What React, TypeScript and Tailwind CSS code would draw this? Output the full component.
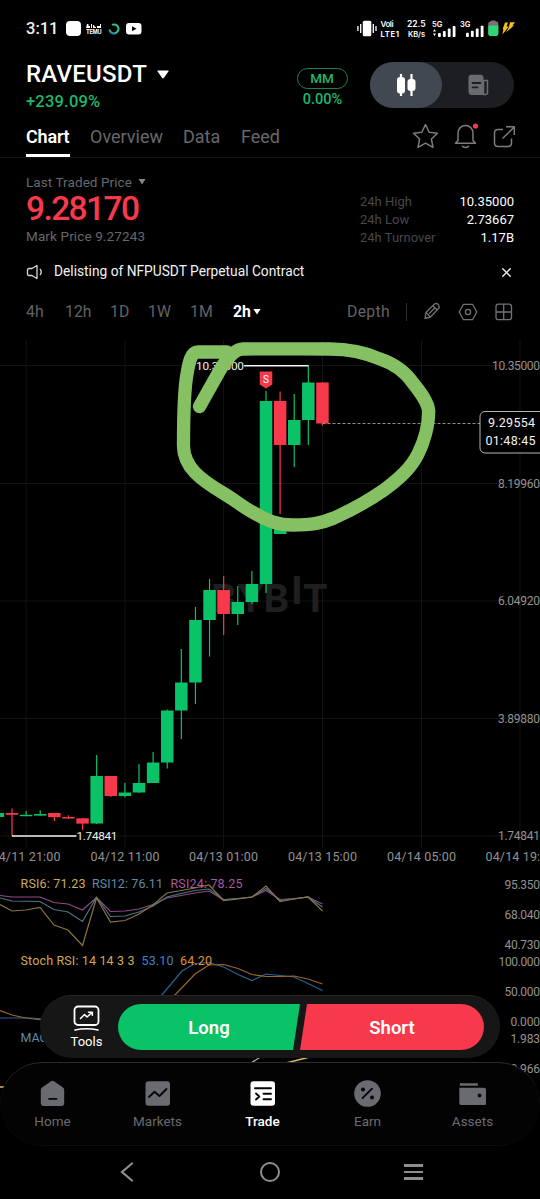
import { X } from "lucide-react";
import type { ReactNode } from "react";
import clsx from "clsx";

const UP = "#0ac268";
const DOWN = "#f8384b";

type Candle = {
  up: boolean;
  top: number;
  bottom: number;
  high: number;
  low: number;
};

const c = (
  up: boolean,
  top: number,
  bottom: number,
  high = top,
  low = bottom
): Candle => ({ up, top, bottom, high, low });

const candles: Candle[] = [
  c(true, 813, 817),
  c(false, 813, 814.8, 808.5, 836),
  c(true, 814.8, 816.2, 811),
  c(true, 814, 815.6, 810.3),
  c(false, 813, 817.2, 813, 821),
  c(false, 817, 818.5, 815.3, 819),
  c(false, 818.3, 823.6, 818, 830),
  c(true, 776, 823.5, 755, 824),
  c(false, 776, 796, 776, 797),
  c(true, 792.5, 796, 783, 797.5),
  c(true, 783, 792.5, 764, 793),
  c(true, 762.5, 783, 752),
  c(true, 710.5, 762.5, 709.5, 768.5),
  c(true, 682.5, 710.5, 649, 739),
  c(true, 620, 682.5, 607, 704),
  c(true, 590, 620, 579, 656.5),
  c(false, 590, 614, 576, 635),
  c(true, 602, 614, 586, 625),
  c(true, 584, 602, 571, 604),
  c(true, 401, 584, 391, 593),
  c(false, 401, 445, 391.5, 514),
  c(true, 420, 445, 394, 467),
  c(true, 382.5, 420, 365, 445),
  c(false, 382.5, 423.5, 382.5, 425.5),
];

const priceAxis: [string, number][] = [
  ["10.35000", 365.5],
  ["8.19960", 483.5],
  ["6.04920", 601],
  ["3.89880", 718.5],
  ["1.74841", 836],
];

const subAxis: [string, number][] = [
  ["95.350", 884.5],
  ["68.040", 914.5],
  ["40.730", 945],
  ["100.000", 962],
  ["50.000", 992],
  ["0.000", 1022],
  ["1.983", 1039],
  ["0.966", 1069],
];

const timeAxis: [string, number][] = [
  ["04/11 21:00", 26],
  ["04/12 11:00", 125],
  ["04/13 01:00", 223.5],
  ["04/13 15:00", 322.5],
  ["04/14 05:00", 421.5],
  ["04/14 19:00", 520],
];

const indicatorLines: { color: string; points: string }[] = [
  {
    color: "#8f4b8a",
    points:
      "0,895.5 12,897 40,897 54,902.5 68,904 82.5,910 96.5,897.5 110.5,911.5 125,911 139,909 153,904.5 167,898 181,895.5 195,893 209,891 223.5,900 238,898.5 252,897 266,890.5 280,899.5 294,898.5 308,897 322.5,904",
  },
  {
    color: "#4b7688",
    points:
      "0,898 12,901 40,901.5 54,909.5 68,912 82.5,921.5 96.5,897 110.5,916.5 125,916 139,912 153,906 167,897 181,893.5 195,890.5 209,889 223.5,899.5 238,898.5 252,897 266,888.5 280,900.5 294,899 308,897 322.5,907",
  },
  {
    color: "#8a7440",
    points:
      "0,904.5 12,911 26,910 40,907.5 54,925 68,930 82.5,945.5 96.5,898 110.5,922 125,920.5 139,914 153,905 167,893 181,890.5 195,888 209,885 223.5,900.5 238,899 252,897 266,886 280,901.5 294,899 308,897 322.5,911",
  },
  {
    color: "#276394",
    points:
      "0,1018 30,1018 60,1020 110,1020 140,1016 161,996 182,971 195,963.5 209,962.5 223.5,967 238,974.5 252,980.5 266,974 280,975.5 294,977 308,983.5 322.5,990.5",
  },
  {
    color: "#9a682a",
    points:
      "0,1010.5 12,1015 26,1018 42,1020 110,1022 150,1016 174,996 195,974 209,965 223.5,964.5 238,968.5 252,974.5 266,976.5 280,976.5 294,976 308,979 322.5,984",
  },
];

function PriceChart() {
  return (
    <svg
      className="block shrink-0"
      fontFamily="Roboto, sans-serif"
      height={764}
      viewBox="0 335 540 764"
      width={540}
    >
      <g stroke="#121212" strokeWidth={1}>
        {priceAxis.map(([label, y]) => (
          <path d={`M0 ${y}H540`} key={label} />
        ))}
        {timeAxis.map(([label, x]) => (
          <path d={`M${x} 340V848`} key={label} />
        ))}
      </g>

      {/* Watermark */}
      <g
        fill="#1f1f1f"
        fontFamily="Inter, sans-serif"
        fontSize={38.5}
        fontWeight={700}
      >
        <text x={211} y={612}>
          B
        </text>
        <text x={236.5} y={612}>
          Y
        </text>
        <text x={263.5} y={612}>
          B
        </text>
        <text x={291.5} y={604}>
          I
        </text>
        <text x={302.5} y={612}>
          T
        </text>
      </g>

      {candles.map((candle, i) => {
        const x = -2.1 + i * 14.11;
        const color = candle.up ? UP : DOWN;
        return (
          <g fill={color} key={x}>
            <rect
              height={candle.low - candle.high}
              width={1.2}
              x={x - 0.6}
              y={candle.high}
            />
            <rect
              height={candle.bottom - candle.top}
              width={12.5}
              x={x - 6.25}
              y={candle.top}
            />
          </g>
        );
      })}

      {/* Trade markers */}
      <path d="M274 534V521l6-4 6.500 4v13z" fill={UP} />
      <path d="M259.700 371.500h12.600v13l-6.300 4-6.300-4z" fill={DOWN} />
      <text fill="#fff" fontSize={10} textAnchor="middle" x={266} y={382.500}>
        S
      </text>

      {/* High / low callouts */}
      <path d="M244 365.800H308.500M12 836H76.500" stroke="#f2f2f2" strokeWidth={1.4} />
      <g fill="#eee" fontSize={11.8}>
        <text textLength={48} x={196} y={369.500}>
          10.35000
        </text>
        <text textLength={41} x={76.500} y={840}>
          1.74841
        </text>
      </g>

      <path
        d="M322.500 423.500H480"
        stroke="#8c8c8c"
        strokeDasharray="3 2"
        strokeWidth={1}
      />

      {indicatorLines.map((line) => (
        <polyline
          fill="none"
          key={line.color}
          points={line.points}
          stroke={line.color}
          strokeWidth={1.2}
        />
      ))}
      <path d="M251 1063L262 1056" stroke="#aebccb" strokeWidth={1.2} />
      <path d="M286 1063L308 1057.500M0 1087h6" stroke="#d9bb62" strokeWidth={1.4} />

      {/* Axis labels */}
      <g fill="#929292" fontSize={12}>
        {priceAxis.map(([label, y]) => (
          <text
            key={label}
            textLength={label.length === 8 ? 48 : 42}
            x={label.length === 8 ? 492 : 498}
            y={y + 4}
          >
            {label}
          </text>
        ))}
        {subAxis.map(([label, y]) => (
          <text
            key={label}
            textLength={label.length * 6 - 0.5}
            x={540.5 - label.length * 6}
            y={y + 4}
          >
            {label}
          </text>
        ))}
        {timeAxis.map(([label, x]) => (
          <text
            fontSize={12.500}
            key={label}
            textLength={69}
            x={x - 34.500}
            y={861}
          >
            {label}
          </text>
        ))}
      </g>

      {/* Indicator legends */}
      <g fontSize={12.500}>
        <text fill="#d0a955" textLength={65} x={20.500} y={888}>
          RSI6: 71.23
        </text>
        <text fill="#5d8ba6" textLength={71} x={92} y={888}>
          RSI12: 76.11
        </text>
        <text fill="#a8579f" textLength={72} x={170.500} y={888}>
          RSI24: 78.25
        </text>
        <text fill="#d0a955" textLength={114} x={20.500} y={965}>
          Stoch RSI: 14 14 3 3
        </text>
        <text fill="#3f82cf" textLength={32} x={141.500} y={965}>
          53.10
        </text>
        <text fill="#e0912f" textLength={32} x={180} y={965}>
          64.20
        </text>
        <text fill="#5d8ba6" x={20.500} y={1042}>
          MACD
        </text>
      </g>

      {/* Last price tag */}
      <rect
        fill="#000"
        height={41.500}
        rx={5}
        stroke="#b5b5b5"
        width={68}
        x={480}
        y={411.500}
      />
      <g fill="#f2f2f2" fontSize={12.500}>
        <text textLength={47} x={488} y={427.300}>
          9.29554
        </text>
        <text textLength={50} x={485.500} y={445.300}>
          01:48:45
        </text>
      </g>

      {/* Hand-drawn highlight */}
      <path
        d="M227 352L198 352C191 352 189 362 187 374C184 390 183.500 420 183.500 446C183.500 467 201 480 223 493C235 500 244 508 256 514C268 521 278 525 293 525C312 525 322 523 334 518C352 510 368 501 384 490C400 478 411 468 418 454C424 442 428.700 425 428.700 411C428 402 421 393 413 383C404 370 392 363 380 359C364 352 347 349 330 349C300 348.500 270 349 243 349C234 349 226 360 220 370L199.500 406.500"
        fill="none"
        stroke="#85c162"
        strokeLinecap="round"
        strokeLinejoin="round"
        strokeWidth={13.3}
      />
    </svg>
  );
}

function Signal({ label, bars }: { label: string; bars: number[] }) {
  return (
    <svg fill="#fff" height={18} viewBox="0 0 24 18" width={24}>
      <text fontFamily="Inter, sans-serif" fontSize={7.5} fontWeight={600} x={0} y={6.5}>
        {label}
      </text>
      {label === "5G" && <path d="M1 11.500l1.500-2.500 1.500 2.500zM1 13.500h3L2.500 16z" />}
      {bars.map((h, i) => (
        <rect
          height={h}
          key={h}
          rx={0.800}
          width={2.800}
          x={6 + i * 4.900}
          y={17 - h}
        />
      ))}
    </svg>
  );
}

function StatusBar() {
  return (
    <div className="flex h-[57px] shrink-0 items-center pr-[25px] pl-[26px]">
      <span className="w-[33px] pt-[1px] font-medium text-[#f0f0f0] text-[16.5px] leading-none">
        3:11
      </span>
      <span className="ml-[7px] size-[15px] rounded-[4px] bg-white" />
      <svg className="ml-[5px]" fill="#fff" height={12} viewBox="0 0 16 12" width={16}>
        <path d="M0 5h4V3H2.500V1H1zM5 1h1v4H5zM7 2h1l1 2h1V5H7zM11 3h3V1h1v4h-4z" />
        <text
          fontFamily="Inter, sans-serif"
          fontSize={5.600}
          fontWeight={700}
          textLength={15.500}
          x={0}
          y={11}
        >
          TEMU
        </text>
      </svg>
      <svg className="ml-[6px]" fill="none" height={12} viewBox="0 0 12 12" width={12}>
        <path d="M4 1.900A4.500 4.500 0 1 1 1.500 6.500" stroke="#2fbf8d" strokeWidth={2} />
        <path d="M2.500 9A4.500 4.500 0 0 0 7 10.500" stroke="#2b7fb8" strokeWidth={1.200} />
      </svg>
      <svg className="ml-[6px]" height={12} viewBox="0 0 16 12" width={16}>
        <rect fill="#fff" height={11.500} rx={3} width={15.500} />
        <path d="M6 3.300v5l4.500-2.500z" fill="#000" />
      </svg>

      <div className="ml-auto flex items-center">
        <svg fill="#fff" height={17} viewBox="0 0 20 17" width={20}>
          <rect height={15.500} rx={1.500} width={8.500} x={5.800} y={0.700} />
          <path
            d="M3.700 4v9M.9 6v5M16.300 4v9M19 6v5"
            stroke="#fff"
            strokeWidth={1.300}
          />
        </svg>
        <svg
          className="ml-[3px]"
          fill="#fff"
          fontFamily="Inter, sans-serif"
          height={18}
          viewBox="0 0 20 18"
          width={20}
        >
          <text fontSize={8} fontWeight={600} textLength={13} x={0.500} y={7}>
            Voli
          </text>
          <text fontSize={7.500} fontWeight={700} textLength={18.500} x={0.500} y={16.500}>
            LTE1
          </text>
        </svg>
        <svg
          className="ml-[7px]"
          fill="#fff"
          fontFamily="Inter, sans-serif"
          height={18}
          viewBox="0 0 20 18"
          width={20}
        >
          <text fontSize={8.500} fontWeight={600} textLength={18.500} x={0} y={7}>
            22.5
          </text>
          <text fontSize={7.500} fontWeight={600} textLength={17} x={1} y={16.500}>
            KB/s
          </text>
        </svg>
        <div className="ml-[5px] flex gap-1">
          <Signal bars={[4, 6, 8.500, 11]} label="5G" />
          <Signal bars={[4.200, 6.200, 8.400, 11.200]} label="3G" />
        </div>
        <svg className="ml-[4px]" height={17} viewBox="0 0 11 17" width={11}>
          <rect fill="#7d7075" height={6} rx={1} width={5} x={2.700} y={0.500} />
          <rect fill="#7d7075" height={14} rx={2} width={10} x={0.300} y={1.500} />
          <path d="M.3 5.500h10v8.500a2 2 0 0 1-2 2h-6a2 2 0 0 1-2-2z" fill="#2bd873" />
        </svg>
        <svg className="ml-[3px]" fill="#f5c21d" height={15} viewBox="0 0 13 15" width={13}>
          <path d="M3 1.500h3L4.500 5.500h2.300L.5 13.500l.9-5.300H.6zM8 1.300h5L10.500 4.500H12L4 11.500l2.800-5z" />
        </svg>
      </div>
    </div>
  );
}

function Header() {
  return (
    <div className="flex h-[55px] shrink-0 pt-1 pl-[26px]">
      <div className="w-[270px]">
        <div className="flex items-center gap-[10px]">
          <h1 className="font-medium text-[24px] text-white leading-[27px] tracking-[0.25px]">
            RAVEUSDT
          </h1>
          <svg fill="#fff" height={9} viewBox="0 0 12 9" width={12}>
            <path d="M1 .5h10q1 0 .4.9L7 7.800q-1 1.200-2 0L.6 1.400Q0 .5 1 .5z" />
          </svg>
        </div>
        <p className="mt-[3px] font-medium text-[#1fb76b] text-[16.5px] leading-[21px] tracking-[0.2px]">
          +239.09%
        </p>
      </div>
      <div className="mt-[7px] flex w-[52px] flex-col items-center text-[#1fb76b]">
        <span className="flex h-[21px] w-[51px] items-center justify-center rounded-full border border-[#1a8450] font-medium text-[13.5px]">
          MM
        </span>
        <span className="mt-[2px] ml-[1px] font-medium text-[14.5px] leading-[17px]">
          0.00%
        </span>
      </div>
      <div className="mt-[1px] ml-[22px] flex h-[46px] w-[144px] rounded-full bg-[#1d1e22]">
        <div className="flex w-[72px] items-center justify-center rounded-full bg-[#424852]">
          <svg fill="#fff" height={24} viewBox="0 0 20 24" width={20}>
            <rect height={16.500} rx={3} width={8} x={1} y={4} />
            <rect height={12} rx={3} width={8} x={11.500} y={6} />
            <path d="M5 1v22M15.500 1v22" stroke="#fff" strokeWidth={2.200} />
          </svg>
        </div>
        <div className="flex w-[72px] items-center justify-center">
          <svg fill="none" height={22} viewBox="0 0 21 22" width={21}>
            <path
              d="M4 .7h8.500a3 3 0 0 1 3 3V21H4a3.500 3.500 0 0 1-3.500-3.500V4A3.300 3.300 0 0 1 4 .7z"
              fill="#696b70"
            />
            <path
              d="M15.500 6.500h4v12a2 2 0 0 1-2 2h-2z"
              fill="#1d1e22"
              stroke="#696b70"
              strokeWidth={1.500}
            />
            <path
              d="M4.500 9h8M4.500 13.300h5"
              stroke="#1d1e22"
              strokeLinecap="round"
              strokeWidth={1.800}
            />
          </svg>
        </div>
      </div>
    </div>
  );
}

function Tabs() {
  return (
    <div className="flex h-[46px] shrink-0 items-start border-[#121212] border-b pl-[26px] text-[#66686c] text-[18px]">
      <div className="flex h-[45px] w-[44px] flex-col justify-between border-white border-b-[3px] pt-[11px] font-semibold text-white leading-[27px] tracking-[-0.2px]">
        Chart
      </div>
      <span className="mt-[11px] ml-[20px] w-[73px] leading-[27px]">Overview</span>
      <span className="mt-[11px] ml-[20px] w-[37px] leading-[27px]">Data</span>
      <span className="mt-[11px] ml-[21px] leading-[27px]">Feed</span>
      <svg
        className="mt-[10px] mr-[24px] ml-auto"
        fill="none"
        height={28}
        stroke="#7b7c80"
        strokeLinejoin="round"
        strokeWidth={1.500}
        viewBox="412 122 104 28"
        width={104}
      >
        <path d="M425.500 124.500l3.700 7.700 8.300 1-6.100 5.800 1.600 8.300-7.500-4.100-7.500 4.100 1.600-8.300-6.100-5.800 8.300-1z" />
        <path
          d="M455.500 143.300H475.500L473 140.500V133.500C473 128.500 469.700 125.500 465.500 125.500S458 128.500 458 133.500V140.500L455.500 143.300M462.500 146.300q3 2.200 6 0"
          strokeLinecap="round"
        />
        <path d="M503 129.500H498q-3.500 0-3.500 3.500V143q0 3.500 3.500 3.500H508q3.500 0 3.500-3.500V138.500M502.500 138.500L514 127.300M506 126.800H514.300V135" />
        <circle cx={475.500} cy={126} fill="#f8384b" r={2.600} stroke="none" />
      </svg>
    </div>
  );
}

const stats = [
  { label: "24h High", value: "10.35000" },
  { label: "24h Low", value: "2.73667" },
  { label: "24h Turnover", value: "1.17B" },
];

function PriceSummary() {
  return (
    <div className="flex h-[93px] shrink-0 justify-between pr-[26px] pl-[26px]">
      <div className="pt-[15px] text-[#66676b] text-[13.5px]">
        <div className="flex items-center gap-[6px] leading-[18px] tracking-[0.08px]">
          Last Traded Price
          <svg fill="#85868a" height={6} viewBox="0 0 8 6" width={8}>
            <path d="M.5 0h7L4 5.500z" />
          </svg>
        </div>
        <div className="mt-[1px] font-medium text-[#f8384b] text-[33.5px] leading-[34px] tracking-[-1.6px]">
          9.28170
        </div>
        <div className="mt-[1px] leading-[18px] tracking-[0.12px]">
          Mark Price 9.27243
        </div>
      </div>
      <div className="mt-[34.5px] w-[154px] text-[13px]">
        {stats.map((s) => (
          <div className="flex justify-between leading-[18px]" key={s.label}>
            <span className="text-[#47484c]">{s.label}</span>
            <span className="text-white">{s.value}</span>
          </div>
        ))}
      </div>
    </div>
  );
}

function Notice() {
  return (
    <div className="flex h-[42px] shrink-0 items-center pr-[26px] pl-[26px] text-[#f2f2f2] text-[13.75px]">
      <svg
        fill="none"
        height={16}
        stroke="#d8d8d8"
        strokeLinejoin="round"
        strokeWidth={1.300}
        viewBox="0 0 17 16"
        width={17}
      >
        <path d="M11 1.500v13L6 11.500H3q-1.500 0-1.500-1.500V6Q1.500 4.500 3 4.500h3z" />
        <path d="M14 5q2.500 3 0 6" />
      </svg>
      <span className="mb-[1px] ml-[11px]">Delisting of NFPUSDT Perpetual Contract</span>
      <X className="ml-auto size-[15px]" strokeWidth={2.2} />
    </div>
  );
}

const intervals = [
  { label: "4h", width: "w-[39px]" },
  { label: "12h", width: "w-[45px]" },
  { label: "1D", width: "w-[38px]" },
  { label: "1W", width: "w-[42px]" },
  { label: "1M", width: "w-[43px]" },
];

function IntervalBar() {
  return (
    <div className="flex h-[42px] shrink-0 items-center pb-[4px] pl-[26px] text-[#626367] text-[15.8px]">
      {intervals.map((item) => (
        <span className={clsx(item.width, "shrink-0")} key={item.label}>
          {item.label}
        </span>
      ))}
      <span className="font-bold text-white">2h</span>
      <svg className="ml-[2px]" fill="#fff" height={6} viewBox="0 0 8 6" width={8}>
        <path d="M.4 0h7.200L4 5.500z" />
      </svg>
      <span className="mr-[16px] ml-auto tracking-[0.3px]">Depth</span>
      <span className="mr-[15px] h-[18px] w-px bg-[#2e2f33]" />
      <svg
        className="mr-[26px]"
        fill="none"
        height={20}
        stroke="#707175"
        strokeLinejoin="round"
        strokeWidth={1.300}
        viewBox="422 302 92 20"
        width={92}
      >
        <path d="M425 318.500L426 312.500L434.500 304Q436.500 302.800 438.200 304.400Q440 306.500 438.700 308.300L430.500 317zM432.800 305.700L437.300 310M426 312.500L430.500 317M435 307.700L429 313.800" />
        <path d="M463.500 304.300H472.500L476.800 312L472.500 319.700H463.500L459.200 312z" />
        <circle cx={468} cy={312} r={2.600} />
        <rect height={15.500} rx={2.500} width={15.500} x={496} y={304.200} />
        <path d="M503.700 304.200v15.500M496 312h15.500" />
      </svg>
    </div>
  );
}

function TradeBar() {
  return (
    <div className="absolute top-[995px] left-[40px] flex h-[63px] w-[460px] items-center rounded-full border-[#262626] border-t bg-[#161616]">
      <div className="flex w-[78px] flex-col items-center pl-[15px] text-[13px] text-white">
        <svg
          fill="none"
          height={27}
          stroke="#fff"
          strokeLinecap="round"
          strokeLinejoin="round"
          strokeWidth={1.800}
          viewBox="0 0 27 27"
          width={27}
        >
          <rect height={18.500} rx={3.500} width={24} x={1.500} y={1.500} />
          <path
            d="M7.500 13.500L11.500 9.500l2.500 2.500L19 7.500M15.500 7.300h3.800v3M2 25q11.500-2.500 23 0"
            strokeWidth={1.600}
          />
        </svg>
        <span className="mt-[2px] leading-[15px]">Tools</span>
      </div>
      <button
        className="-mr-px h-[46px] w-[182px] rounded-r-[2px] rounded-l-full bg-[#0ac268] pt-[3px] font-semibold text-[18.5px] text-white [clip-path:polygon(0_0,100%_0,calc(100%_-_7px)_100%,0_100%)]"
        type="button"
      >
        Long
      </button>
      <button
        className="ml-px h-[46px] w-[184px] rounded-l-[2px] rounded-r-full bg-[#f8384b] pt-[3px] font-semibold text-[18.5px] text-white [clip-path:polygon(7px_0,100%_0,100%_100%,0_100%)]"
        type="button"
      >
        Short
      </button>
    </div>
  );
}

const navItems: { label: string; icon: ReactNode }[] = [
  {
    label: "Home",
    icon: (
      <>
        <path
          d="M3 7.500L12 1.300q1.500-1 3 0L24 7.500q1.200.9 1.200 2.500V23q0 3-3 3H4.800q-3 0-3-3V10Q1.800 8.400 3 7.500z"
          fill="currentColor"
        />
        <path d="M10 18.800h7.500" stroke="#050505" strokeLinecap="round" strokeWidth={1.800} />
      </>
    ),
  },
  {
    label: "Markets",
    icon: (
      <>
        <rect fill="currentColor" height={24.500} rx={3} width={24.500} x={1.500} y={1.200} />
        <path
          d="M5 17l5.500-5.200 5 4.200L22.500 9"
          fill="none"
          stroke="#050505"
          strokeLinecap="round"
          strokeLinejoin="round"
          strokeWidth={1.900}
        />
      </>
    ),
  },
  {
    label: "Trade",
    icon: (
      <>
        <rect fill="currentColor" height={24.500} rx={3} width={24.500} x={1.500} y={1.200} />
        <path
          d="M6 8.200h16M14.500 13.800H22M14.500 19.200H22M7 13.500l3.300 3-3.300 3"
          fill="none"
          stroke="#050505"
          strokeLinecap="round"
          strokeLinejoin="round"
          strokeWidth={1.900}
        />
      </>
    ),
  },
  {
    label: "Earn",
    icon: (
      <>
        <circle cx={13.500} cy={13.500} fill="currentColor" r={13.300} />
        <circle cx={9} cy={9.500} fill="#050505" r={2} />
        <circle cx={18} cy={17.500} fill="#050505" r={2} />
        <path d="M8.500 18.200l9.500-9.500" stroke="#050505" strokeLinecap="round" strokeWidth={1.900} />
      </>
    ),
  },
  {
    label: "Assets",
    icon: (
      <>
        <path
          d="M.8 3.300h18v2.500H.8zM.3 7.800h25q1.700 0 1.700 1.700v14q0 1.500-1.500 1.500H2Q.3 25 .3 23.300z"
          fill="currentColor"
        />
        <circle cx={20.500} cy={15.500} fill="#050505" r={1.900} />
      </>
    ),
  },
];

function BottomNav() {
  return (
    <div className="absolute inset-x-0 top-[1062px] h-[137px] bg-[linear-gradient(transparent_0,transparent_36px,#000_36px)]">
      <div className="flex h-[84px] rounded-[42px] border-[#0c0c0c] border-t border-b border-t-[#2c2c2c] bg-[#030303]">
        {navItems.map((item) => (
          <div
            className={clsx(
              "flex w-[105px] shrink-0 flex-col items-center pt-[17px] text-[13.5px]",
              item.label === "Trade" ? "font-medium text-white" : "text-[#6a6b70]"
            )}
            key={item.label}
          >
            <svg height={27} viewBox="0 0 27 27" width={27}>
              {item.icon}
            </svg>
            <span className="mt-[5px] leading-[18px]">{item.label}</span>
          </div>
        ))}
      </div>
      <div className="flex h-[52px] items-center justify-between pr-[117px] pl-[120px]">
        <svg fill="none" height={20} stroke="#8e8e8e" strokeWidth={2.200} viewBox="0 0 14 20" width={14}>
          <path d="M12 1.500L2 10l10 8.500" strokeLinecap="round" />
        </svg>
        <span className="ml-[2px] size-[20px] rounded-full border-2 border-[#8e8e8e]" />
        <div className="flex flex-col gap-[4px]">
          <span className="h-[2.5px] w-[19px] bg-[#8e8e8e]" />
          <span className="h-[2.5px] w-[19px] bg-[#8e8e8e]" />
          <span className="h-[2.5px] w-[19px] bg-[#8e8e8e]" />
        </div>
      </div>
    </div>
  );
}

export default function App() {
  return (
    <div className="relative flex h-[1199px] w-[540px] flex-col overflow-hidden bg-black font-[Roboto,sans-serif]">
      <StatusBar />
      <Header />
      <Tabs />
      <PriceSummary />
      <Notice />
      <IntervalBar />
      <PriceChart />
      <TradeBar />
      <BottomNav />
    </div>
  );
}
